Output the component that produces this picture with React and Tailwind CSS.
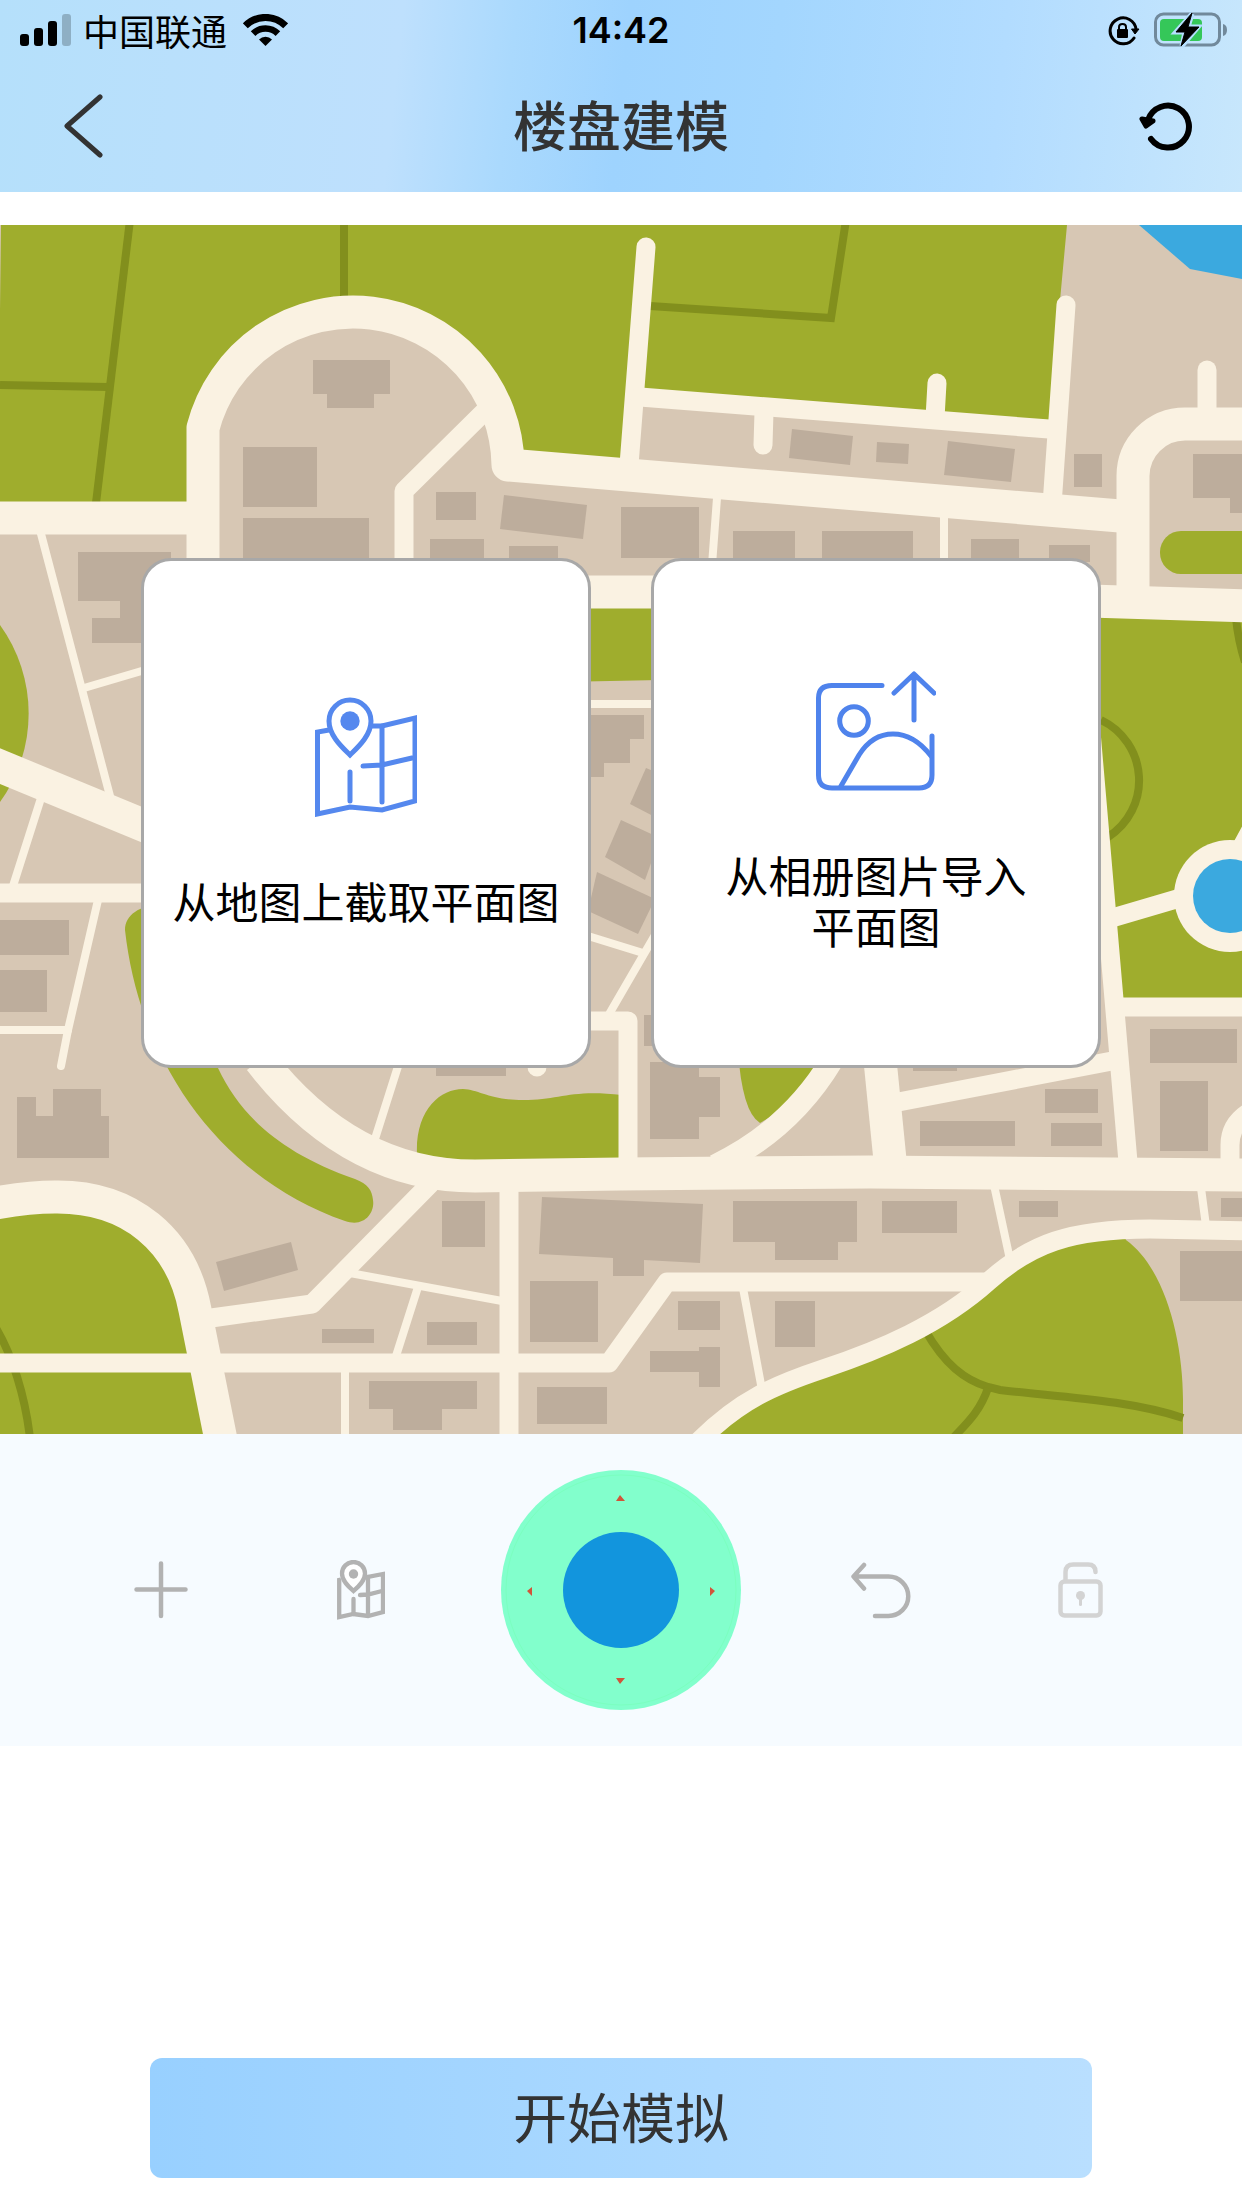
import clsx from 'clsx';

const rectBuildings = [
  [313, 360, 77, 34], [327, 394, 47, 14], [243, 447, 74, 60], [243, 518, 126, 82],
  [436, 492, 40, 28], [430, 539, 54, 60], [509, 546, 49, 50], [621, 507, 78, 51],
  [733, 531, 62, 50], [822, 531, 91, 50], [971, 539, 48, 50], [1049, 545, 41, 17],
  [1074, 454, 28, 33], [0, 920, 69, 35], [0, 970, 47, 42], [436, 1050, 70, 26],
  [644, 1015, 40, 31], [650, 1062, 49, 77], [699, 1077, 21, 40], [913, 1050, 44, 21],
  [1045, 1089, 53, 24], [1051, 1123, 51, 23], [920, 1121, 95, 25], [1150, 1029, 87, 34],
  [1160, 1081, 48, 70], [733, 1201, 124, 41], [775, 1242, 63, 18], [882, 1201, 75, 32],
  [1019, 1201, 39, 16], [1221, 1198, 21, 19], [1180, 1251, 62, 50], [678, 1301, 42, 29],
  [775, 1301, 40, 46], [442, 1201, 43, 46], [530, 1281, 68, 61], [537, 1387, 70, 37],
  [369, 1381, 108, 28], [393, 1409, 49, 21], [322, 1329, 52, 14], [427, 1322, 50, 23],
];

const polyBuildings = [
  '504,495 587,505 583,539 500,529',
  '78,552 171,552 171,643 92,643 92,618 120,618 120,601 78,601',
  '792,429 853,436 850,465 789,458',
  '877,442 909,444 908,464 876,462',
  '948,441 1015,449 1011,482 944,475',
  '1193,454 1242,454 1242,513 1230,513 1230,498 1193,498',
  '560,715 644,715 644,739 630,739 630,763 604,763 604,777 560,777',
  '646,768 670,778 655,817 630,804',
  '621,820 660,838 645,880 605,857',
  '597,872 655,899 638,934 588,911',
  '17,1097 36,1097 36,1116 53,1116 53,1089 101,1089 101,1116 109,1116 109,1158 17,1158',
  '216,1262 291,1242 298,1270 224,1291',
  '542,1197 703,1204 700,1263 644,1260 644,1276 613,1276 613,1258 539,1254',
  '650,1351 699,1351 699,1347 720,1347 720,1387 699,1387 699,1372 650,1372',
];

const parks = [
  'M1,225H1067L1048,430L640,395L621,470L520,460L400,530H0V310Z',
  'M0,625A151,151 0 0 1 0,802Z',
  'M560,600H660V680L560,682Z',
  'M1090,605L1250,612V1005H1120L1095,780Z',
  'M125,930C140,1065 222,1178 345,1221C365,1228 375,1212 373,1200C372,1190 368,1184 355,1179C280,1153 240,1115 218,1068L200,1000L160,905C140,905 125,915 125,930Z',
  'M417,1155C415,1110 440,1089 463,1089C480,1090 490,1100 523,1100C560,1100 570,1089 622,1095V1160L479,1162Z',
  'M738,1050Q742,1112 760,1123L800,1100L830,1050Z',
  'M0,1210L55,1200C130,1196 182,1240 195,1310L221,1437H0Z',
  'M700,1440C740,1400 775,1385 823,1369C880,1350 940,1325 989,1281C1030,1244 1070,1230 1122,1231L1126,1240C1165,1268 1183,1340 1183,1400V1440Z',
];

const parkPaths = [
  'M130,220L96,503', 'M0,385L108,387', 'M344,220V305', 'M846,220L831,318L650,306',
  'M1101,720A67,67 0 0 1 1108,837', 'M1236,618Q1238,640 1245,662',
  'M-4,1328C12,1355 25,1395 30,1438',
  'M925,1330C945,1365 965,1380 988,1387L1000,1390C1060,1397 1130,1400 1183,1418',
  'M988,1388C980,1412 965,1425 953,1438',
];

const lanes = [
  'M40,530L110,796', 'M84,688L145,670', 'M42,795L13,886', 'M98,900L68,1030L61,1066', 'M0,1030H68',
  'M717,498L712,565', 'M944,515V570', 'M560,704H660', 'M588,936L643,953', 'M655,935L608,1016',
  'M400,1060L374,1142', 'M350,1273L502,1301', 'M418,1287L396,1356', 'M345,1370V1440',
  'M994,1185L1009,1255', 'M1201,1188L1206,1226', 'M743,1288L762,1390', 'M1235,848L1250,820',
];

const streets = [
  'M488,408L404,491V620', 'M646,247L629,465', 'M640,397L1049,429', 'M937,383L935,418',
  'M764,412L763,445', 'M1066,305L1052,505', 'M1207,370V420', 'M0,893H150',
  'M537,1040V1067', 'M570,1021H628V1165', 'M1090,720L1128,1162', 'M1112,918L1180,898',
  'M1118,1007H1250', 'M888,1104L1112,1061',
  'M1230,1165V1145Q1230,1125 1248,1113', 'M509,1185V1440', 'M0,1363H609L667,1282H985',
  'M204,1319L312,1304L430,1184',
  'M700,1440C740,1400 775,1385 823,1369C880,1350 940,1325 989,1281C1030,1244 1070,1229 1150,1229L1250,1231',
];

const avenues = [
  'M203,620V428A155,155 0 0 1 508,465L1120,516', 'M0,518H190', 'M570,592H660', 'M1090,601L1250,606',
  'M1250,424H1185A52,52 0 0 0 1133,476V600', 'M-10,762L150,828',
  'M260,1060Q350,1176 475,1176L621,1174L870,1172L1250,1175',
  'M879,1050L891,1170', 'M-5,1203Q30,1197 55,1197C130,1196 182,1240 195,1310L221,1440',
];

function CityMap() {
  return (
    <svg viewBox="0 225 1242 1209" className="block w-full" aria-hidden="true">
      <rect y="225" width="1242" height="1209" fill="#d7c7b4" />
      <g fill="#9fad2d">
        {parks.map((d) => <path key={d} d={d} />)}
        <rect x="1160" y="531" width="120" height="43" rx="21" />
      </g>
      <g fill="none" stroke="#828f1d" strokeWidth="8">
        {parkPaths.map((d) => <path key={d} d={d} />)}
      </g>
      <path d="M1139,225H1242V279L1190,269Z" fill="#3ba9df" />
      {/* blocks enclosed by roads */}
      <g fill="#d7c7b4">
        <path d="M203,620V428A155,155 0 0 1 508,465L530,620Z" />
        <path d="M640,397L1056,428L1050,512L632,480Z" />
      </g>
      <g fill="#bdad9c">
        {rectBuildings.map(([x, y, w, h]) => (
          <rect key={`${x}-${y}`} x={x} y={y} width={w} height={h} />
        ))}
        {polyBuildings.map((points) => <polygon key={points} points={points} />)}
      </g>
      <g fill="none" stroke="#faf2e2" strokeLinejoin="round">
        <g strokeWidth="8" strokeLinecap="round">{lanes.map((d) => <path key={d} d={d} />)}</g>
        <g strokeWidth="19" strokeLinecap="round">{streets.map((d) => <path key={d} d={d} />)}</g>
        <path d="M832,1060Q790,1130 715,1166" strokeWidth="23" />
        <g strokeWidth="33">{avenues.map((d) => <path key={d} d={d} />)}</g>
      </g>
      <circle cx="1230" cy="896" r="56" fill="#faf2e2" />
      <circle cx="1230" cy="896" r="37" fill="#3ba9df" />
    </svg>
  );
}

function StatusBar() {
  return (
    <div className="grid h-[60px] grid-cols-3 items-center px-5 text-black">
      <div className="flex items-center">
        <svg width="51" height="32" viewBox="0 0 51 32" aria-hidden="true">
          <rect y="20" width="9" height="12" rx="3" />
          <rect x="14" y="14" width="9" height="18" rx="3" />
          <rect x="28" y="7" width="9" height="25" rx="3" />
          <rect x="42" width="9" height="32" rx="3" opacity="0.22" />
        </svg>
        <span className="ml-3 text-[36px] leading-[48px]">中国联通</span>
        <svg className="ml-4 shrink-0" width="45" height="33" viewBox="0 0 45 33" aria-hidden="true">
          <g fill="none" stroke="#000">
            <path d="M2.3 11.8A28.5 28.5 0 0 1 42.7 11.8" strokeWidth="7" />
            <path d="M10.1 19.6A17.5 17.5 0 0 1 34.9 19.6" strokeWidth="6.5" />
          </g>
          <path d="M22.5 32L16 25.5A9.3 9.3 0 0 1 29 25.5Z" />
        </svg>
      </div>
      <span className="text-center font-['Inter'] text-[36px] leading-[48px] font-semibold">14:42</span>
      <div className="flex items-center justify-end gap-3.5">
        <svg width="32" height="32" viewBox="0 0 32 32" aria-hidden="true">
          <path d="M28 15A13 13 0 1 0 26 24" fill="none" stroke="#000" strokeWidth="3" strokeLinecap="round" />
          <path d="M23.500 15H31L27 20Z" stroke="#000" strokeWidth="1" strokeLinejoin="round" />
          <rect x="9" y="15" width="11" height="9" rx="1" />
          <path d="M11 16V13Q11 10 14.500 10T18 13V16" fill="none" stroke="#000" strokeWidth="2" />
        </svg>
        <svg className="-mr-1.5" width="74" height="36" viewBox="0 0 74 36" aria-hidden="true">
          <rect x="1.500" y="2" width="64" height="31" rx="8" fill="none" stroke="#71899b" strokeWidth="3" />
          <path d="M69 12Q73 13 73 18T69 24Z" fill="#71899b" />
          <rect x="6" y="7" width="42" height="22" rx="4" fill="#35c759" />
          <path d="M38 2L22 20H31L28 34L44 15H34L38 2Z" fill="#b5dfff" stroke="#b5dfff" strokeWidth="5" />
          <path d="M38 1L22 20H31L27 34L45 15H34Z" stroke="#000" strokeLinejoin="round" />
        </svg>
      </div>
    </div>
  );
}

function Header() {
  return (
    <header className="h-48 bg-[linear-gradient(96deg,#b5e0fb_0%,#bee0fd_32%,#aad9fd_41%,#9ed3fe_50%,#a3d6fe_62%,#b2dcff_80%,#c8e7fc_100%)]">
      <StatusBar />
      <div className="flex h-[132px] items-center justify-between px-[50px]">
        <button type="button" aria-label="返回" className="flex w-[68px] justify-center">
          <svg width="40" height="64" viewBox="0 0 40 64" fill="none" stroke="#333" strokeWidth="5" strokeLinecap="round" strokeLinejoin="round">
            <path d="M36 3L3 32L36 61" />
          </svg>
        </button>
        <h1 className="pb-1 text-[54px] leading-[72px] font-medium text-[#333]">楼盘建模</h1>
        <button type="button" aria-label="重置" className="flex w-[68px] justify-end">
          <svg width="56" height="52" viewBox="0 0 56 52" fill="none" stroke="#000" strokeLinecap="round">
            <path d="M12 20A21 21 0 1 1 15 39" strokeWidth="6" />
            <path d="M6 19L17 21L10 26Z" fill="#000" strokeWidth="5" strokeLinejoin="round" />
          </svg>
        </button>
      </div>
    </header>
  );
}

function MapPinIcon() {
  return (
    <svg width="102" height="120" viewBox="0 0 102 120" fill="none" stroke="#5588ee" strokeWidth="5" strokeLinecap="round" strokeLinejoin="miter">
      <path d="M14 33L2.500 35V117L35 110L67 113L100 104V21L67 29H57" strokeLinecap="butt" />
      <path d="M67 29V105M48 69L67 68L97 61M35 75V104" />
      <path d="M35 58C28 51 14 39 14 24A21 21 0 0 1 56 24C56 39 42 51 35 58Z" />
      <circle cx="35" cy="24" r="9.700" fill="#5588ee" stroke="none" />
    </svg>
  );
}

function ImageUploadIcon() {
  return (
    <svg width="120" height="120" viewBox="0 0 120 120" fill="none" stroke="#4f83ec" strokeWidth="5" strokeLinecap="round">
      <path d="M66 14.500H16Q2.500 14.500 2.500 27V104Q2.500 117 16 117H103Q116 117 116 104V65" />
      <circle cx="38" cy="50" r="14.300" />
      <path d="M25 115L43 84C53 68 65 63 77 63C92 63 105 72 115 85" />
      <path d="M98 4V49M78 22L98 3L118 22" strokeLinejoin="round" />
    </svg>
  );
}

function SourceCard({ icon, children }) {
  return (
    <button
      type="button"
      className="flex h-[510px] w-[450px] flex-col items-center justify-center gap-[58px] rounded-[30px] border-[3px] border-[#a8a8a8] bg-white text-[43px] leading-[51px] whitespace-nowrap text-black"
    >
      {icon}
      <span className="pb-1">{children}</span>
    </button>
  );
}

const tools = {
  add: (
    <svg width="54" height="58" viewBox="0 0 54 58" fill="none" stroke="#b2b2b2" strokeWidth="4.500" strokeLinecap="round">
      <path d="M27 2.500V55M2.500 28.500H51.500" />
    </svg>
  ),
  map: (
    <svg width="48" height="60" viewBox="0 0 48 60" fill="none" stroke="#b2b2b2" strokeWidth="4.300" strokeLinecap="round">
      <path d="M4 19.500L2.200 20V57L16.500 54L31 56L46 52V14L30 17H28" strokeLinecap="butt" />
      <path d="M31 17V55M23 35L31 34.500L45 31M16.500 39V54" />
      <path d="M16.500 31C12 27 5 21 5 13.500A11.500 11.500 0 0 1 28 13.500C28 21 21 27 16.500 31Z" fill="#fff" />
      <circle cx="16.500" cy="14" r="4.700" fill="#b2b2b2" stroke="none" />
    </svg>
  ),
  undo: (
    <svg width="60" height="57" viewBox="0 0 60 57" fill="none" stroke="#b2b2b2" strokeWidth="4.500" strokeLinecap="round" strokeLinejoin="round">
      <path d="M13 3L2.500 14.500L13 26.500M3 14.500H37.500A19.500 19.500 0 0 1 37.500 54H24" />
    </svg>
  ),
  lock: (
    <svg width="46" height="56" viewBox="0 0 46 56" fill="none" stroke="#d3d3d3" strokeWidth="4.500" strokeLinecap="round">
      <rect x="2.500" y="19.500" width="40" height="34" rx="4" />
      <path d="M7.500 19V10Q7.500 2.500 15.500 2.500H30Q37.500 2.500 37.500 10" />
      <circle cx="22.500" cy="33.500" r="4.500" fill="#d3d3d3" stroke="none" />
      <path d="M22.500 35V42.500" strokeWidth="3" />
    </svg>
  ),
};

function ToolButton({ label, icon, disabled }) {
  return (
    <button
      type="button"
      aria-label={label}
      disabled={disabled}
      className={clsx('flex h-[120px] w-[200px] items-center justify-center', disabled && 'cursor-not-allowed')}
    >
      {icon}
    </button>
  );
}

function Joystick() {
  return (
    <button type="button" aria-label="移动" className="mx-10 rounded-full">
      <svg width="240" height="240" viewBox="0 0 240 240">
        <circle cx="120" cy="120" r="120" fill="#82ffcc" />
        <circle cx="120" cy="120" r="115" fill="none" stroke="#7bffc0" strokeWidth="1" />
        <circle cx="120" cy="120" r="58" fill="#1295dd" />
        <path d="M119 25L124 31H115Z M115 208H124L119 214Z M26 121L31 117V126Z M214 121L209 117V126Z" fill="#d1553a" />
      </svg>
    </button>
  );
}

export default function App() {
  return (
    <div className="flex min-h-screen flex-col bg-white font-['Noto_Sans_CJK_SC',sans-serif]">
      <Header />

      <main className="relative mt-[33px]">
        <CityMap />
        <div className="absolute inset-0 flex items-center justify-center gap-[60px] pb-[33px]">
          <SourceCard icon={<MapPinIcon />}>从地图上截取平面图</SourceCard>
          <SourceCard icon={<ImageUploadIcon />}>
            从相册图片导入
            <br />
            平面图
          </SourceCard>
        </div>
      </main>

      <div className="flex h-[312px] items-center justify-center bg-[#f6fbff]">
        <ToolButton label="添加" icon={tools.add} />
        <ToolButton label="地图" icon={tools.map} />
        <Joystick />
        <ToolButton label="撤销" icon={tools.undo} />
        <ToolButton label="锁定" icon={tools.lock} disabled />
      </div>

      <footer className="mt-auto px-[150px] pb-[30px]">
        <button
          type="button"
          className="h-[120px] w-full rounded-xl bg-linear-to-r from-[#98d0ff] to-[#b9dfff] pb-1 text-[54px] leading-[72px] text-[#333]"
        >
          开始模拟
        </button>
      </footer>
    </div>
  );
}
